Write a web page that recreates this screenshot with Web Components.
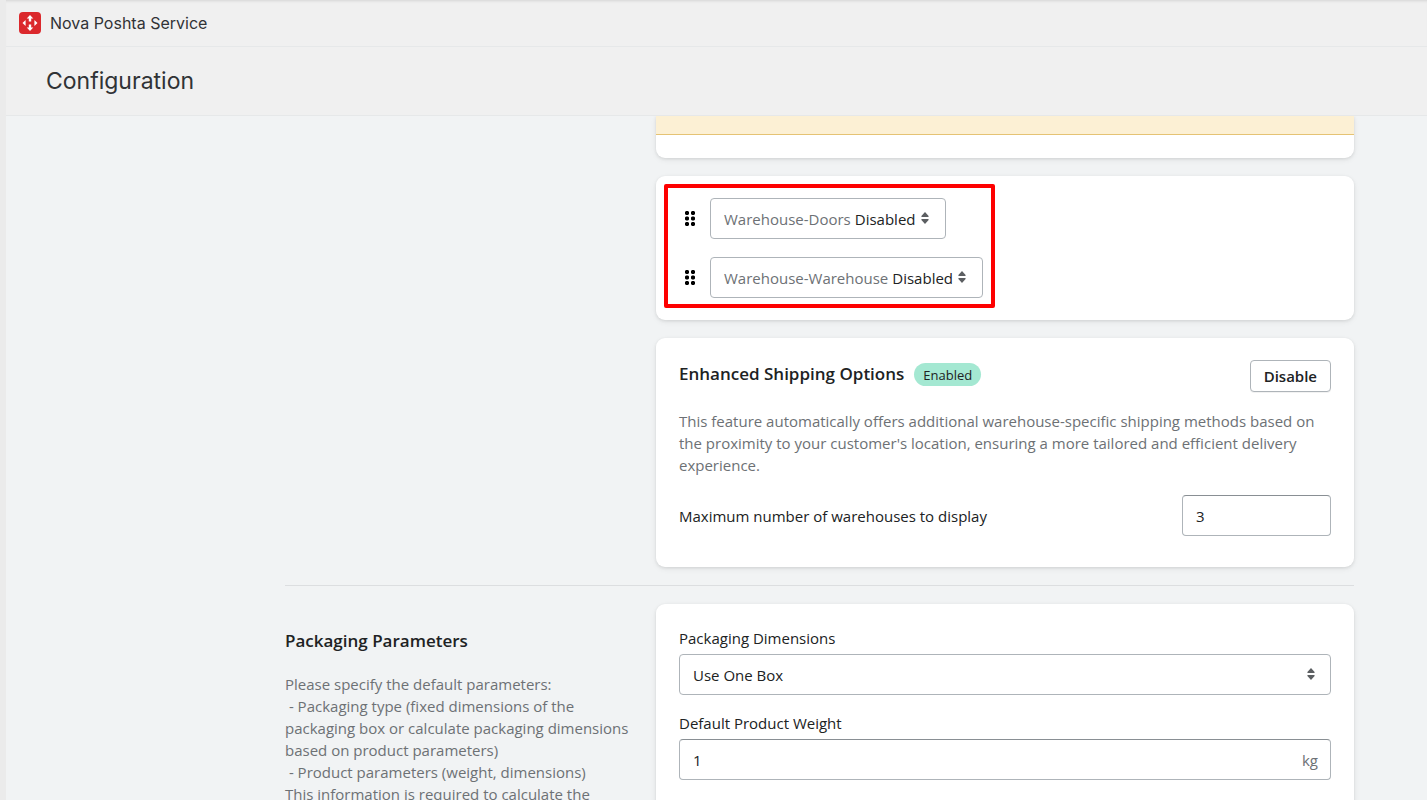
<!DOCTYPE html>
<html lang="en">
<head>
<meta charset="utf-8">
<title>Nova Poshta Service</title>
<style>
  body {
    margin: 0;
    font: 15px/22px "Open Sans", "Noto Sans", sans-serif;
    color: #202223;
    background: #f1f3f4;
  }
</style>
</head>
<body>
<np-shell>
  <np-section>
    <np-stack slot="content">
      <np-card flush><np-banner-end></np-banner-end></np-card>
      <np-card compact>
        <np-highlight>
          <np-sort-row label="Warehouse-Doors"></np-sort-row>
          <np-sort-row label="Warehouse-Warehouse"></np-sort-row>
        </np-highlight>
      </np-card>
      <np-card><np-feature></np-feature></np-card>
    </np-stack>
  </np-section>
  <np-section divided>
    <np-annotation slot="aside" heading="Packaging Parameters">Please specify the default parameters:<br>&nbsp;- Packaging type (fixed dimensions of the packaging box or calculate packaging dimensions based on product parameters)<br>&nbsp;- Product parameters (weight, dimensions)<br>This information is required to calculate the</np-annotation>
    <np-card slot="content"><np-packaging></np-packaging></np-card>
  </np-section>
</np-shell>

<script>
  const define = (name, html, setup) => {
    const template = document.createElement('template');
    template.innerHTML = '<style>*{box-sizing:border-box}</style>' + html;
    customElements.define(name, class extends HTMLElement {
      constructor() {
        super();
        this.attachShadow({ mode: 'open' }).append(template.content.cloneNode(true));
      }
      connectedCallback() {
        if (setup) setup(this, this.shadowRoot);
      }
    });
  };

  const arrows = `<svg class="arrows" width="8" height="12" viewBox="0 0 8 12" aria-hidden="true">
    <path fill="#5c5f62" d="M4 0 L7.6 4 Q8 5 7 5 H1 Q0 5 .4 4Z M4 12 L7.6 8 Q8 7 7 7 H1 Q0 7 .4 8Z"/></svg>`;

  define('np-logo', `
    <style>:host { display: block; width: 22px; height: 22px } svg { display: block }</style>
    <svg width="22" height="22" viewBox="0 0 22 22" aria-hidden="true">
      <rect width="22" height="22" rx="4" fill="#db282c"/>
      <path fill="#fff" d="M11 3 L14.3 6.600 H12.200 V9.400 H9.800 V6.600 H7.700Z M11 19 L14.300 15.400 H12.200 V12.600 H9.800 V15.400 H7.700Z M3.500 11 L6.600 7.900 V14.100Z M18.500 11 L15.400 7.900 V14.100Z"/>
    </svg>`);

  define('np-shell', `
    <style>
      :host { display: flex; flex-direction: column; height: 100vh; box-sizing: border-box;
        border-left: 6px solid #ebebeb; }
      .app { display: flex; align-items: center; gap: 9px; height: 47px; padding: 0 13px;
        background: #f0f0f0; border-bottom: 1px solid #e6e8e9;
        box-shadow: inset 0 3px 3px -2px #d4d4d4; font: 16px/22px Inter, sans-serif; color: #303336; flex: none }
      .title { display: flex; align-items: center; height: 69px; padding: 0 40px; flex: none;
        background: #f0f0f0; border-bottom: 1px solid #e6e8e9 }
      h1 { margin: 0; font: 400 23px/32px Inter, sans-serif; color: #303336 }
      main { flex: 1; min-height: 0; overflow: auto; scrollbar-width: none; padding: 0 73px 40px 279px }
    </style>
    <header class="app"><np-logo></np-logo><span>Nova Poshta Service</span></header>
    <div class="title"><h1>Configuration</h1></div>
    <main><slot></slot></main>`);

  define('np-section', `
    <style>
      :host { display: grid; grid-template-columns: minmax(0, 1fr) minmax(0, 2fr); column-gap: 22px }
      :host([divided]) { border-top: 1px solid #dcdee0; margin-top: 18px; padding-top: 18px }
    </style>
    <div><slot name="aside"></slot></div>
    <div><slot name="content"></slot></div>`);

  define('np-stack', `<style>:host { display: flex; flex-direction: column; gap: 18px }</style><slot></slot>`);

  define('np-card', `
    <style>
      :host { display: block; padding: 22px 23px; border-radius: 9px; background: #fff;
        box-sizing: border-box; box-shadow: 0 1px 3px #3f3f441f, 0 2px 6px #1718180f }
      :host([flush]) { padding: 0 0 23px; border-radius: 0 0 9px 9px }
      :host([compact]) { padding: 8px 8px 12px }
    </style><slot></slot>`);

  define('np-banner-end', `<style>:host { display: block; height: 19px; box-sizing: border-box;
    background: #fcf0d4; border-bottom: 1px solid #e5c374 }</style>`);

  define('np-highlight', `
    <style>:host { display: flex; flex-direction: column; gap: 18px; width: fit-content;
      border: 4px solid #fe0000; border-radius: 2px; padding: 10px 8px 6px 16px }</style>
    <slot></slot>`);

  define('np-sort-row', `
    <style>
      :host { display: flex; align-items: center; gap: 14px }
      button { border: 0; background: none; padding: 0; width: 12px; height: 18px; cursor: grab }
      svg { display: block }
      .field { display: flex; align-items: center; height: 41px; border: 1px solid #aeb4b9;
        border-radius: 4px; padding-left: 13px; position: relative }
      label { color: #6d7175; white-space: nowrap }
      select { appearance: none; border: 0; background: none; margin: 0; padding: 0 29px 0 4px; height: 38px;
        font: inherit; color: #202223; outline: 0; field-sizing: content }
      .arrows { position: absolute; right: 16px; top: 13px; pointer-events: none }
    </style>
    <button type="button" aria-label="Reorder"><svg width="12" height="18" viewBox="0 0 12 18">
      <path d="M2 1h2l1 1v2l-1 1H2L1 4V2zM8 1h2l1 1v2l-1 1H8L7 4V2zM2 6.500h2l1 1v2l-1 1H2l-1-1v-2zM8 6.500h2l1 1v2l-1 1H8l-1-1v-2zM2 12h2l1 1v2l-1 1H2l-1-1v-2zM8 12h2l1 1v2l-1 1H8l-1-1v-2z"/></svg></button>
    <div class="field"><label for="state"></label>
      <select id="state"><option>Disabled</option><option>Enabled</option></select>${arrows}</div>`,
    (host, root) => { root.querySelector('label').textContent = host.getAttribute('label'); });

  define('np-feature', `
    <style>
      :host { display: block; padding-bottom: 9px }
      header { display: flex; align-items: flex-start }
      h2 { margin: 3px 10px 0 0; font-size: 17px; font-weight: 600; line-height: 22px }
      .badge { margin-top: 3px; padding: 1px 9px 0; border-radius: 12px; background: #a4e8d2;
        font-size: 13px; line-height: 22px }
      button { margin-left: auto; height: 32px; padding: 0 13px; border: 1px solid #aeb4b9; border-radius: 4px;
        background: #fff; color: #202223; font: 600 15px/22px "Open Sans", sans-serif; box-shadow: 0 1px 0 #0000000d }
      p { margin: 18px 0 19px; color: #6d7175 }
      .row { display: flex; align-items: center; justify-content: space-between }
      input { width: 149px; height: 41px; padding: 0 13px; border: 1px solid #aeb4b9; border-top-color: #898f94;
        border-radius: 4px; font: inherit; color: #202223; background: #fff }
    </style>
    <header><h2>Enhanced Shipping Options</h2><span class="badge">Enabled</span><button type="button">Disable</button></header>
    <p>This feature automatically offers additional warehouse-specific shipping methods based on the proximity to your customer's location, ensuring a more tailored and efficient delivery experience.</p>
    <div class="row"><label for="max">Maximum number of warehouses to display</label><input id="max" type="text" inputmode="numeric" value="3"></div>`);

  define('np-annotation', `
    <style>
      :host { display: block; padding-top: 26px }
      h2 { margin: 0 0 21px; font-size: 17px; font-weight: 600; line-height: 22px }
      p { margin: 0; color: #6d7175 }
    </style>
    <h2></h2><p><slot></slot></p>`,
    (host, root) => { root.querySelector('h2').textContent = host.getAttribute('heading'); });

  define('np-packaging', `
    <style>
      :host { display: block }
      label { display: block; padding: 1px 0 5px }
      .field { position: relative; height: 41px; margin-bottom: 16px }
      select, input { width: 100%; height: 100%; padding: 0 13px; margin: 0; border: 1px solid #aeb4b9;
        border-radius: 4px; font: inherit; color: #202223; background: #fff; appearance: none }
      input { border-top-color: #898f94 }
      .arrows { position: absolute; right: 16px; top: 14px; pointer-events: none }
      .unit { position: absolute; right: 13px; top: 10px; color: #6d7175 }
    </style>
    <label for="dims">Packaging Dimensions</label>
    <div class="field"><select id="dims"><option>Use One Box</option></select>${arrows}</div>
    <label for="weight">Default Product Weight</label>
    <div class="field"><input id="weight" type="text" value="1"><span class="unit">kg</span></div>`);
</script>
</body>
</html>
